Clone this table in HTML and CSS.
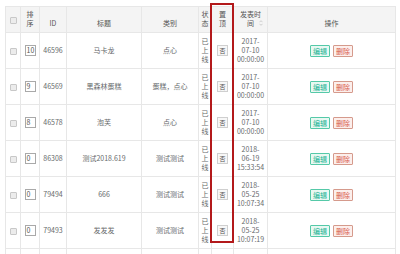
FILE: index.html
```html
<!DOCTYPE html>
<html lang="zh">
<head>
<meta charset="utf-8">
<link rel="stylesheet" href="styles.css">
</head>
<body>
<div class="wrap">
<table class="grid">
<colgroup>
<col class="c-cb"><col class="c-sort"><col class="c-id"><col class="c-title"><col class="c-cat"><col class="c-st"><col class="c-top"><col class="c-time"><col class="c-op">
</colgroup>
<thead>
<tr class="head">
<th><span class="cb"></span></th>
<th>排<br>序</th>
<th>ID</th>
<th>标题</th>
<th>类别</th>
<th>状<br>态</th>
<th>置<br>顶</th>
<th class="sortable">发表时<br>间<svg class="sorticon" width="4" height="6" viewBox="0 0 4 6"><path d="M0.5 2.2 L2 0.7 L3.5 2.2 M0.5 3.8 L2 5.3 L3.5 3.8" fill="none" stroke="#c4c4c4" stroke-width="0.8"/></svg></th>
<th>操作</th>
</tr>
</thead>
<tbody>
<tr>
<td><span class="cb"></span></td><td><span class="num">10</span></td><td>46596</td><td>马卡龙</td><td>点心</td><td>已<br>上<br>线</td><td><span class="tog">否</span></td><td>2017-<br>07-10<br>00:00:00</td><td><span class="btn edit">编辑</span><span class="btn del">删除</span></td>
</tr>
<tr>
<td><span class="cb"></span></td><td><span class="num">9</span></td><td>46569</td><td>黑森林蛋糕</td><td>蛋糕，点心</td><td>已<br>上<br>线</td><td><span class="tog">否</span></td><td>2017-<br>07-10<br>00:00:00</td><td><span class="btn edit">编辑</span><span class="btn del">删除</span></td>
</tr>
<tr>
<td><span class="cb"></span></td><td><span class="num">8</span></td><td>46578</td><td>泡芙</td><td>点心</td><td>已<br>上<br>线</td><td><span class="tog">否</span></td><td>2017-<br>07-10<br>00:00:00</td><td><span class="btn edit">编辑</span><span class="btn del">删除</span></td>
</tr>
<tr>
<td><span class="cb"></span></td><td><span class="num">0</span></td><td>86308</td><td>测试2018.619</td><td>测试测试</td><td>已<br>上<br>线</td><td><span class="tog">否</span></td><td>2018-<br>06-19<br>15:33:54</td><td><span class="btn edit">编辑</span><span class="btn del">删除</span></td>
</tr>
<tr>
<td><span class="cb"></span></td><td><span class="num">0</span></td><td>79494</td><td>666</td><td>测试测试</td><td>已<br>上<br>线</td><td><span class="tog">否</span></td><td>2018-<br>05-25<br>10:07:34</td><td><span class="btn edit">编辑</span><span class="btn del">删除</span></td>
</tr>
<tr>
<td><span class="cb"></span></td><td><span class="num">0</span></td><td>79493</td><td>发发发</td><td>测试测试</td><td>已<br>上<br>线</td><td><span class="tog">否</span></td><td>2018-<br>05-25<br>10:07:19</td><td><span class="btn edit">编辑</span><span class="btn del">删除</span></td>
</tr>
<tr>
<td></td><td></td><td></td><td></td><td></td><td></td><td></td><td></td><td></td>
</tr>
</tbody>
</table>
<div class="highlight"></div>
</div>
</body>
</html>
```

FILE: styles.css
```css
html, body {
  margin: 0;
  padding: 0;
  background: #ffffff;
}
body {
  padding: 6px 0 0 5px;
  font-family: "Noto Sans CJK SC", "Noto Sans", sans-serif;
  font-size: 7px;
  line-height: 9px;
  color: #676a6c;
}
.wrap {
  position: relative;
  width: 390px;
}
.grid {
  border-collapse: collapse;
  table-layout: fixed;
  width: 390px;
}
.c-cb { width: 15px; }
.c-sort { width: 19px; }
.c-id { width: 27px; }
.c-title { width: 75px; }
.c-cat { width: 57px; }
.c-st { width: 13px; }
.c-top { width: 22px; }
.c-time { width: 34px; }
.c-op { width: 128px; }

.grid th, .grid td {
  border: 1px solid #e7e7e7;
  padding: 0;
  text-align: center;
  white-space: nowrap;
}
.grid th {
  background: #f4f4f4;
  color: #555;
  font-weight: normal;
  vertical-align: bottom;
  padding-bottom: 4px;
}
.head { height: 26px; }
.grid tbody tr { height: 36px; }
.grid td { vertical-align: middle; }
.grid th:first-child, .grid td:first-child { vertical-align: middle; padding-bottom: 0; }
.sortable { position: relative; }
.sorticon {
  position: absolute;
  right: 4px;
  bottom: 6px;
}
.cb {
  display: inline-block;
  width: 5px;
  height: 5px;
  border: 1px solid #c8c8c8;
  background: #ececec;
  border-radius: 1px;
  vertical-align: middle;
}
.num {
  display: inline-block;
  box-sizing: border-box;
  width: 11px;
  height: 11px;
  border: 1px solid #a9a9a9;
  line-height: 9px;
  text-align: left;
  padding-left: 1px;
  color: #555;
  vertical-align: middle;
}
.tog {
  display: inline-block;
  box-sizing: border-box;
  width: 11px;
  height: 11px;
  border: 1px solid #cfcfcf;
  background: #f7f7f7;
  line-height: 9px;
  font-size: 6px;
  color: #555;
  vertical-align: middle;
}
.btn {
  display: inline-block;
  box-sizing: border-box;
  height: 12px;
  line-height: 10px;
  padding: 0 2px;
  border: 1px solid;
  border-radius: 1px;
  vertical-align: middle;
}
.edit {
  color: #1ab394;
  border-color: #55c9a8;
  background: #e9f8f2;
}
.del {
  color: #d8574a;
  border-color: #d59a8c;
  background: #fcefec;
  margin-left: 3px;
}
.highlight {
  position: absolute;
  left: 205px;
  top: -3px;
  width: 20px;
  height: 236px;
  border: 2px solid #b3191b;
}
```
